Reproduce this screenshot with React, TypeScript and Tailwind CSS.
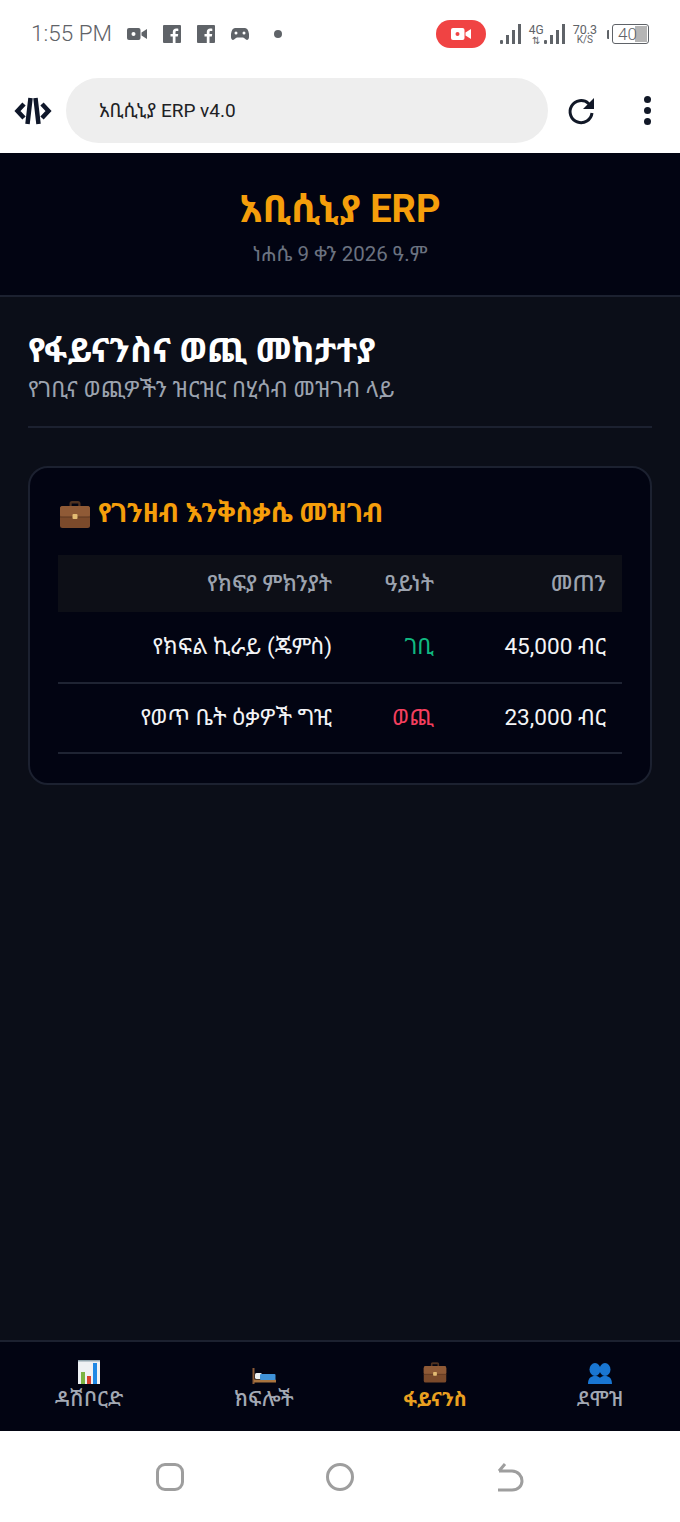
import React from "react";

const font = { fontFamily: '"Roboto","Noto Sans","DejaVu Sans","Noto Sans Ethiopic",sans-serif' };

function Briefcase({ size, className = "" }: { size: number; className?: string }) {
  return (
    <svg width={size} height={size} viewBox="0 0 32 32" className={className}>
      <path d="M10.500 9V5.500C10.500 4 11.500 3 13 3h6c1.500 0 2.500 1 2.500 2.500V9h-2.200V5.500h-6.600V9z" fill="#4e3120" />
      <rect x="1" y="8" width="30" height="22" rx="2.500" fill="#7b4a2b" />
      <rect x="1" y="8" width="30" height="11" rx="2.500" fill="#8f5a36" />
      <rect x="1" y="18.500" width="30" height="1" fill="#5c3720" />
      <rect x="13.500" y="16" width="5" height="5" rx="1" fill="#e3bb73" />
    </svg>
  );
}

function Chart() {
  return (
    <svg width="24" height="24" viewBox="0 0 24 24">
      <rect x="1" y="0" width="22" height="24" fill="#eef1f4" />
      <rect x="1" y="0" width="22" height="1.500" fill="#90a4ae" />
      <rect x="4" y="12" width="4" height="12" fill="#7cb342" />
      <rect x="10" y="16" width="4" height="8" fill="#d8402f" />
      <rect x="16" y="3" width="4" height="21" fill="#1e88e5" />
    </svg>
  );
}

function Bed() {
  return (
    <svg width="24" height="16" viewBox="0 0 24 16">
      <rect x="0.500" y="0" width="2" height="16" fill="#8a5a36" />
      <rect x="2" y="11.500" width="22" height="3" fill="#a8743f" />
      <rect x="3" y="5" width="7" height="6" rx="1.500" fill="#eceff1" />
      <rect x="8" y="6" width="15.500" height="6" rx="1" fill="#3f92d8" />
    </svg>
  );
}

function People() {
  return (
    <svg width="24" height="21" viewBox="0 0 24 21" fill="#1976d2">
      <ellipse cx="7" cy="6.500" rx="5.500" ry="6.500" />
      <ellipse cx="17" cy="6.500" rx="5.500" ry="6.500" />
      <path d="M0 21c0-6 3-8 7-8s5 2 5 2 1-2 5-2 7 2 7 8z" />
    </svg>
  );
}

function Signal() {
  return (
    <svg width="21" height="21" viewBox="0 0 21 21" fill="#5f6368">
      <rect x="0" y="16" width="3" height="4" rx="1" />
      <rect x="6" y="11" width="3" height="9" />
      <rect x="12" y="6" width="3" height="14" />
      <rect x="18" y="0" width="3" height="20" />
    </svg>
  );
}

function Fb() {
  return (
    <svg width="18" height="18" viewBox="0 0 18 18">
      <rect width="18" height="18" rx="1" fill="#5f6368" />
      <path d="M12.500 18v-6.500h2.300l.4-2.600h-2.700V7.300c0-.8.300-1.300 1.400-1.300h1.400V3.700c-.5-.1-1.200-.2-2-.2-2.200 0-3.500 1.300-3.500 3.500v1.900H7.500v2.600h2.300V18z" fill="#fff" />
    </svg>
  );
}

function VideoIcon({ color, dot }: { color: string; dot?: string }) {
  return (
    <svg width="20" height="14" viewBox="0 0 20 14">
      <rect x="0" y="1" width="13.500" height="12" rx="2" fill={color} />
      <path d="M14.500 5.500 20 2v10l-5.500-3.500z" fill={color} />
      <circle cx="6.500" cy="7" r="2" fill={dot ?? "#fff"} />
    </svg>
  );
}

function Nav({ icon, label, active }: { icon: React.ReactNode; label: string; active?: boolean }) {
  return (
    <div className={`flex flex-col items-center leading-none ${active ? "text-[#e9a020]" : "text-[#a3a9b4]"}`}>
      <div className="flex h-[24px] items-end">{icon}</div>
      <span className={`mt-[4px] leading-[22px] ${active ? "text-[20px] font-bold" : "text-[21px] font-medium"}`}>{label}</span>
    </div>
  );
}

function Row({ a, b, bc, c, h }: { a: string; b: string; bc: string; c: string; h: string }) {
  return (
    <tr className={`${h} border-b-2 border-[#1f2433]`}>
      <td className="pr-[16px] text-right text-[#f3f4f6]">{a}</td>
      <td className={`pr-[16px] text-right ${bc}`}>{b}</td>
      <td className="pr-[16px] text-right text-[#f3f4f6]">{c}</td>
    </tr>
  );
}

export default function App() {
  return (
    <div style={font} className="flex h-[1522px] w-[680px] flex-col bg-white">
      <div className="flex h-[71px] items-center pl-[31px] pr-[31px] pb-[3px]">
        <span className="text-[22.500px] font-light text-[#5f6368]">1:55 PM</span>
        <div className="ml-[15px] flex items-center gap-[16px]">
          <VideoIcon color="#5f6368" />
          <Fb />
          <Fb />
          <svg width="18" height="14" viewBox="0 0 18 14" fill="#5f6368">
            <path d="M4 1h10c2 0 3.500 2 4 6 .4 4-.5 6-2 6-1.500 0-2.500-2.500-4-2.500H6C4.500 10.500 3.500 13 2 13 .5 13-.4 11 0 7c.5-4 2-6 4-6z" />
            <circle cx="5" cy="6" r="1.500" fill="#fff" />
            <circle cx="13" cy="6" r="1.500" fill="#fff" />
          </svg>
          <span className="ml-[9px] h-[8px] w-[8px] rounded-full bg-[#5f6368]" />
        </div>
        <div className="ml-auto flex items-center">
          <div className="flex h-[28px] w-[50px] items-center justify-center rounded-full bg-[#f04343]">
            <VideoIcon color="#fff" dot="#f04343" />
          </div>
          <div className="ml-[14px]"><Signal /></div>
          <div className="ml-[8px] flex w-[15px] flex-col items-center text-[12px] leading-[12px] text-[#5f6368]">
            <span>4G</span>
            <span className="text-[10px] leading-[9px]">⇅</span>
          </div>
          <Signal />
          <div className="ml-[8px] flex flex-col items-center text-[12.500px] leading-[11px] text-[#5f6368]">
            <span>70.3</span>
            <span className="text-[10px] leading-[10px]">K/S</span>
          </div>
          <div className="ml-[10px] mr-[3px] h-[9px] w-[2px] rounded-l-[1px] bg-[#5f6368]" />
          <div className="relative h-[20px] w-[37px] overflow-hidden rounded-[3px] border border-[#5f6368] pl-[5px] text-[17px] leading-[18px] font-light text-[#5f6368]">
            <div className="absolute top-[1px] right-[1px] bottom-[1px] w-[12px] bg-[#b5b5b5]" />
            <span className="relative">40</span>
          </div>
        </div>
      </div>

      <div className="flex h-[82px] items-center pb-[3px]">
        <svg width="38" height="30" viewBox="0 0 38 30" className="ml-[14px]" fill="none">
          <path d="M10 8 3.500 15l6.500 7M28 8l6.500 7-6.500 7" stroke="#0f172a" strokeWidth="4.500" />
          <path d="M16.500 2 13.500 28M21.500 2l3 26" stroke="#0f172a" strokeWidth="4.500" />
        </svg>
        <div className="ml-[14px] flex h-[65px] w-[482px] items-center rounded-full bg-[#eeeeee] pl-[33px] pt-[2px] text-[19px] text-[#202124]">
          አቢሲኒያ ERP v4.0
        </div>
        <svg width="30" height="30" viewBox="0 0 30 30" className="ml-[19px]" fill="none">
          <path d="M25 17a11 11 0 1 1-3.500-9.500L25 11" stroke="#111827" strokeWidth="3" />
          <path d="M27 2v11H16z" fill="#111827" />
        </svg>
        <div className="ml-[47px] flex flex-col gap-[4px]">
          <span className="h-[7px] w-[7px] rounded-full bg-[#111827]" />
          <span className="h-[7px] w-[7px] rounded-full bg-[#111827]" />
          <span className="h-[7px] w-[7px] rounded-full bg-[#111827]" />
        </div>
      </div>

      <div className="flex min-h-0 flex-1 flex-col bg-[#0b0e18]">
        <header className="flex h-[144px] flex-col items-center border-b-2 border-[#1c2130] bg-[#020412] pt-[31px]">
          <h1 className="text-[38px] leading-[50px] font-bold text-[#f59e0b]">አቢሲኒያ ERP</h1>
          <p className="mt-[5px] text-[20.500px] leading-[30px] text-[#6b7280]">ነሐሴ 9 ቀን 2026 ዓ.ም</p>
        </header>
        <main className="flex-1 px-[28px] pt-[30px]">
          <div className="border-b-2 border-[#1c2130] pb-[21px]">
            <h2 className="text-[34px] leading-[46px] font-bold text-white">የፋይናንስና ወጪ መከታተያ</h2>
            <p className="pt-[2px] text-[22.700px] leading-[30px] text-[#9ca3af]">የገቢና ወጪዎችን ዝርዝር በሂሳብ መዝገብ ላይ</p>
          </div>
          <section className="mt-[38px] h-[319px] rounded-[20px] border-2 border-[#1c2130] bg-[#020412] px-[28px] pt-[26px]">
            <div className="ml-[1px] flex h-[40px] items-center gap-[7px] text-[26.400px] font-bold text-[#f59e0b]">
              <Briefcase size={32} />
              <span>የገንዘብ እንቅስቃሴ መዝገብ</span>
            </div>
            <table className="mt-[21px] w-full border-collapse text-[22.600px]">
              <thead>
                <tr className="h-[57px] bg-[#0d0f17] text-[22px] text-[#9ca3af]">
                  <th className="pr-[16px] text-right font-medium">የክፍያ ምክንያት</th>
                  <th className="w-[102px] pr-[16px] text-right font-medium">ዓይነት</th>
                  <th className="w-[172px] pr-[16px] text-right font-medium">መጠን</th>
                </tr>
              </thead>
              <tbody>
                <Row h="h-[71px]" a="የክፍል ኪራይ (ጄምስ)" b="ገቢ" bc="text-[#10b981]" c="45,000 ብር" />
                <Row h="h-[70px]" a="የወጥ ቤት ዕቃዎች ግዢ" b="ወጪ" bc="text-[#f43f5e]" c="23,000 ብር" />
              </tbody>
            </table>
          </section>
        </main>
        <nav className="grid h-[91px] grid-cols-[178px_172px_170px_160px] border-t-2 border-[#1c2130] bg-[#020412] pt-[18px]">
          <Nav icon={<Chart />} label="ዳሽቦርድ" />
          <Nav icon={<Bed />} label="ክፍሎች" />
          <Nav icon={<Briefcase size={24} />} label="ፋይናንስ" active />
          <Nav icon={<People />} label="ደሞዝ" />
        </nav>
      </div>

      <div className="flex h-[91px] items-center">
        <div className="ml-[156px] h-[28px] w-[28px] rounded-[9px] border-[3px] border-[#9e9e9e]" />
        <div className="ml-[142px] h-[28px] w-[28px] rounded-full border-[3px] border-[#9e9e9e]" />
        <svg width="28" height="32" viewBox="0 0 28 32" fill="none" className="ml-[142px]" stroke="#9e9e9e" strokeWidth="3">
          <path d="M2 29h14c6 0 10-4 10-9s-4-10-10-10H3M9 3 3 10" />
        </svg>
      </div>
    </div>
  );
}
